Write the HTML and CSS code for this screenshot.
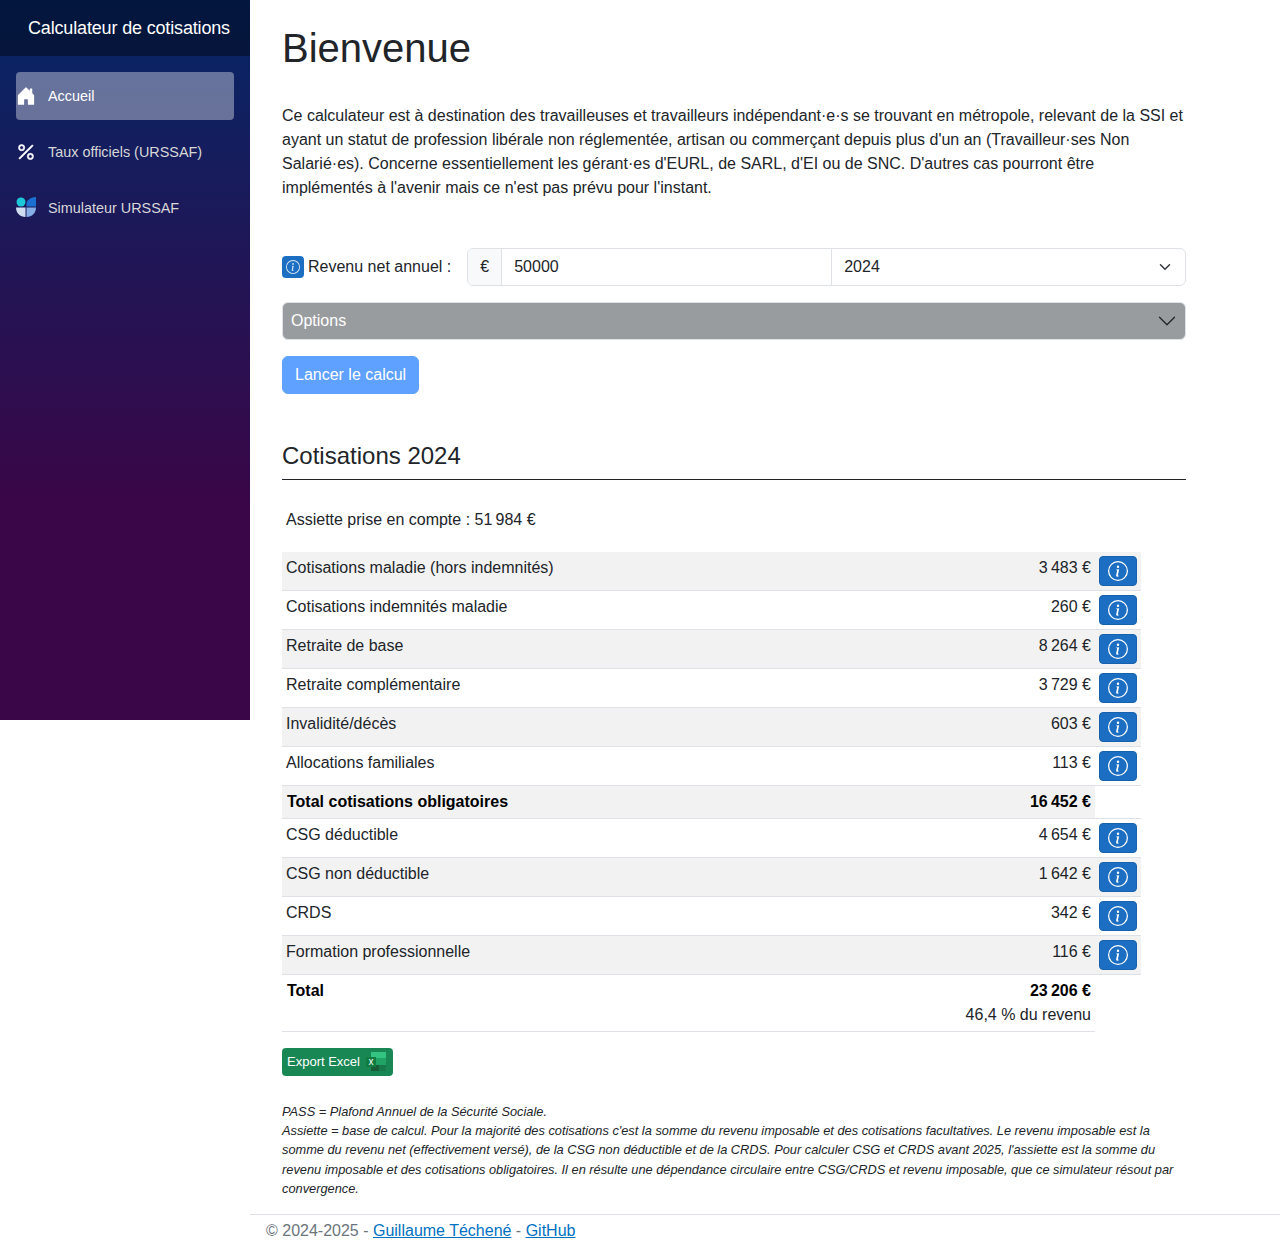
FILE: index.html
```html
<!DOCTYPE html>
<html lang="fr">
<head>
  <meta charset="UTF-8" />
  <meta name="viewport" content="width=device-width, initial-scale=1" />
  <title>Calculateur de cotisations</title>
  <link rel="stylesheet" href="styles.css">
</head>
<body>
  <svg class="sprite" aria-hidden="true">
    <symbol id="info" viewBox="0 0 16 16">
      <path d="M8 15A7 7 0 1 1 8 1a7 7 0 0 1 0 14m0 1A8 8 0 1 0 8 0a8 8 0 0 0 0 16"/>
      <path d="m8.93 6.588-2.29.287-.082.38.45.083c.294.07.352.176.288.469l-.738 3.468c-.194.897.105 1.319.808 1.319.545 0 1.178-.252 1.465-.598l.088-.416c-.2.176-.492.246-.686.246-.275 0-.375-.193-.304-.533zM9 4.5a1 1 0 1 1-2 0 1 1 0 0 1 2 0"/>
    </symbol>
  </svg>

  <aside class="sidebar">
    <div class="brand">Calculateur de cotisations</div>
    <nav class="nav">
      <a class="nav-link active" href="#">
        <svg class="nav-icon" viewBox="0 0 16 16"><path d="M6.5 14.5v-3.505c0-.245.25-.495.5-.495h2c.25 0 .5.25.5.5v3.5a.5.5 0 0 0 .5.5h4a.5.5 0 0 0 .5-.5v-7a.5.5 0 0 0-.146-.354L13 5.793V2.5a.5.5 0 0 0-.5-.5h-1a.5.5 0 0 0-.5.5v1.293L8.354 1.146a.5.5 0 0 0-.708 0l-6 6A.5.5 0 0 0 1.5 7.5v7a.5.5 0 0 0 .5.5h4a.5.5 0 0 0 .5-.5"/></svg>
        Accueil
      </a>
      <a class="nav-link" href="#">
        <svg class="nav-icon icon-percent" viewBox="0 0 16 16"><path d="M13.442 2.558a.625.625 0 0 1 0 .884l-10 10a.625.625 0 1 1-.884-.884l10-10a.625.625 0 0 1 .884 0M4.500 6a1.500 1.500 0 1 1 0-3 1.500 1.500 0 0 1 0 3m0 1a2.500 2.500 0 1 0 0-5 2.500 2.500 0 0 0 0 5m7 6a1.500 1.500 0 1 1 0-3 1.500 1.500 0 0 1 0 3m0 1a2.500 2.500 0 1 0 0-5 2.500 2.500 0 0 0 0 5"/></svg>
        Taux officiels (URSSAF)
      </a>
      <a class="nav-link" href="#">
        <svg class="nav-icon icon-urssaf" viewBox="0 0 20 20">
          <circle cx="5" cy="5" r="4.5" fill="#1cc8d8"/>
          <path d="M10.500 9.500V7c0-3.500 3-6.500 9.500-7v9.500z" fill="#1a6fd0"/>
          <path d="M0 10.500h9.500V20C4 20 0 16 0 10.500z" fill="#cfdcf2"/>
          <path d="M10.500 10.500H20C20 16 16 20 10.500 20z" fill="#86aee6"/>
        </svg>
        Simulateur URSSAF
      </a>
    </nav>
  </aside>

  <div class="page">
    <main class="content">
      <h1>Bienvenue</h1>
      <p class="intro">Ce calculateur est à destination des travailleuses et travailleurs indépendant·e·s se trouvant en métropole, relevant de la SSI et ayant un statut de profession libérale non réglementée, artisan ou commerçant depuis plus d'un an (Travailleur·ses Non Salarié·es). Concerne essentiellement les gérant·es d'EURL, de SARL, d'EI ou de SNC. D'autres cas pourront être implémentés à l'avenir mais ce n'est pas prévu pour l'instant.</p>

      <form class="calc-form">
        <div class="revenue-row">
          <label class="revenue-label">
            <span class="info-small"><svg><use href="#info"/></svg></span>
            Revenu net annuel :
          </label>
          <div class="input-group">
            <span class="input-addon">€</span>
            <span class="input-value">50000</span>
            <span class="input-select">2024
              <svg class="chevron-small" viewBox="0 0 16 16"><path fill="none" stroke="#343a40" stroke-linecap="round" stroke-linejoin="round" stroke-width="2" d="m2 5 6 6 6-6"/></svg>
            </span>
          </div>
        </div>
        <div class="options">
          <span>Options</span>
          <svg class="chevron-large" viewBox="0 0 16 16"><path fill-rule="evenodd" d="M1.646 4.646a.5.5 0 0 1 .708 0L8 10.293l5.646-5.647a.5.5 0 0 1 .708.708l-6 6a.5.5 0 0 1-.708 0l-6-6a.5.5 0 0 1 0-.708"/></svg>
        </div>
        <button type="button" class="run-btn">Lancer le calcul</button>
      </form>

      <h2>Cotisations 2024</h2>
      <p class="assiette">Assiette prise en compte : 51&#8239;984 €</p>

      <table class="results">
        <tr class="odd"><td class="label">Cotisations maladie (hors indemnités)</td><td class="amount">3&#8239;483 €</td><td class="action"><button type="button" class="info-btn"><svg><use href="#info"/></svg></button></td></tr>
        <tr><td class="label">Cotisations indemnités maladie</td><td class="amount">260 €</td><td class="action"><button type="button" class="info-btn"><svg><use href="#info"/></svg></button></td></tr>
        <tr class="odd"><td class="label">Retraite de base</td><td class="amount">8&#8239;264 €</td><td class="action"><button type="button" class="info-btn"><svg><use href="#info"/></svg></button></td></tr>
        <tr><td class="label">Retraite complémentaire</td><td class="amount">3&#8239;729 €</td><td class="action"><button type="button" class="info-btn"><svg><use href="#info"/></svg></button></td></tr>
        <tr class="odd"><td class="label">Invalidité/décès</td><td class="amount">603 €</td><td class="action"><button type="button" class="info-btn"><svg><use href="#info"/></svg></button></td></tr>
        <tr><td class="label">Allocations familiales</td><td class="amount">113 €</td><td class="action"><button type="button" class="info-btn"><svg><use href="#info"/></svg></button></td></tr>
        <tr class="subtotal"><td class="label">Total cotisations obligatoires</td><td class="amount">16&#8239;452 €</td><td class="action"></td></tr>
        <tr><td class="label">CSG déductible</td><td class="amount">4&#8239;654 €</td><td class="action"><button type="button" class="info-btn"><svg><use href="#info"/></svg></button></td></tr>
        <tr class="odd"><td class="label">CSG non déductible</td><td class="amount">1&#8239;642 €</td><td class="action"><button type="button" class="info-btn"><svg><use href="#info"/></svg></button></td></tr>
        <tr><td class="label">CRDS</td><td class="amount">342 €</td><td class="action"><button type="button" class="info-btn"><svg><use href="#info"/></svg></button></td></tr>
        <tr class="odd"><td class="label">Formation professionnelle</td><td class="amount">116 €</td><td class="action"><button type="button" class="info-btn"><svg><use href="#info"/></svg></button></td></tr>
        <tr class="grand-total"><td class="label">Total</td><td class="amount"><strong>23&#8239;206 €</strong><br>46,4 % du revenu</td><td class="action"></td></tr>
      </table>

      <button type="button" class="export-btn">Export Excel
        <svg class="excel-icon" viewBox="0 0 20 19">
          <rect x="5" y="0" width="15" height="6" fill="#33c481"/>
          <rect x="5" y="6" width="15" height="7" fill="#21a366"/>
          <rect x="5" y="13" width="8" height="6" fill="#185c37"/>
          <rect x="13" y="13" width="7" height="6" fill="#17784a"/>
          <rect x="0" y="5" width="10" height="10" fill="#107c41"/>
          <text class="excel-x" x="5" y="12.5" text-anchor="middle">x</text>
        </svg>
      </button>

      <p class="notes">PASS = Plafond Annuel de la Sécurité Sociale.<br>Assiette = base de calcul. Pour la majorité des cotisations c'est la somme du revenu imposable et des cotisations facultatives. Le revenu imposable est la somme du revenu net (effectivement versé), de la CSG non déductible et de la CRDS. Pour calculer CSG et CRDS avant 2025, l'assiette est la somme du revenu imposable et des cotisations obligatoires. Il en résulte une dépendance circulaire entre CSG/CRDS et revenu imposable, que ce simulateur résout par convergence.</p>
    </main>
    <footer class="footer">© 2024-2025 - <a href="#">Guillaume Téchené</a> - <a href="#">GitHub</a></footer>
  </div>
</body>
</html>
```

FILE: styles.css
```css
* {
  box-sizing: border-box;
}
html, body {
  margin: 0;
}
body {
  display: flex;
  align-items: flex-start;
  font-family: "Liberation Sans", Arial, sans-serif;
  font-size: 16px;
  line-height: 24px;
  color: #212529;
  background: #fff;
}
.sprite {
  display: none;
}

/* sidebar */
.sidebar {
  flex: 0 0 250px;
  width: 250px;
  height: 720px;
  background-image: linear-gradient(180deg, #052767 0%, #3a0647 70%);
}
.brand {
  height: 56px;
  display: flex;
  align-items: center;
  padding-left: 28px;
  background: rgba(0, 0, 0, 0.4);
  color: #fff;
  font-size: 18px;
  letter-spacing: -0.16px;
}
.nav {
  display: flex;
  flex-direction: column;
  gap: 8px;
  padding: 16px 16px 0;
}
.nav-link {
  height: 48px;
  display: flex;
  align-items: center;
  gap: 12px;
  border-radius: 4px;
  color: #d7d7d7;
  font-size: 14.4px;
  text-decoration: none;
}
.nav-link.active {
  background: rgba(255, 255, 255, 0.37);
  color: #fff;
}
.nav-icon {
  flex: 0 0 20px;
  width: 20px;
  height: 20px;
  fill: currentColor;
}
.icon-percent {
  stroke: #fff;
  stroke-width: 0.5;
  margin-top: -1px;
  color: #fff;
}
.icon-urssaf {
  margin-top: -2px;
}

/* main */
.page {
  flex: 1;
  min-width: 0;
}
.content {
  padding: 24px 94px 0 32px;
}
h1 {
  margin: 0 0 32px;
  font-size: 40px;
  font-weight: 500;
  line-height: 48px;
}
.intro {
  margin: 0 0 48px;
}
.revenue-row {
  display: flex;
  align-items: center;
  gap: 16px;
}
.revenue-label {
  display: flex;
  align-items: center;
  gap: 4px;
}
.info-small {
  width: 22px;
  height: 22px;
  display: flex;
  align-items: center;
  justify-content: center;
  background: #1b6ec2;
  border-radius: 4px;
}
.info-small svg {
  width: 14px;
  height: 14px;
  fill: #d8e6f5;
}
.input-group {
  flex: 1;
  height: 38px;
  display: flex;
  border: 1px solid #dee2e6;
  border-radius: 6px;
}
.input-addon {
  width: 34px;
  display: flex;
  align-items: center;
  justify-content: center;
  background: #f8f9fa;
  border-right: 1px solid #dee2e6;
  border-radius: 6px 0 0 6px;
}
.input-value {
  width: 330px;
  padding: 6px 12px;
  border-right: 1px solid #dee2e6;
}
.input-select {
  flex: 1;
  display: flex;
  align-items: center;
  justify-content: space-between;
  padding: 6px 14px 6px 12px;
}
.chevron-small {
  width: 12px;
  height: 12px;
}
.options {
  height: 38px;
  margin-top: 16px;
  display: flex;
  align-items: center;
  justify-content: space-between;
  padding: 0 8px 0 8px;
  background: #999c9f;
  border: 1px solid #dee2e6;
  border-radius: 6px;
  color: #fff;
}
.chevron-large {
  width: 20px;
  height: 20px;
  fill: #212529;
}
.run-btn {
  display: block;
  height: 38px;
  margin-top: 16px;
  padding: 0 12px;
  background: #5ea1ff;
  border: 1px solid #5ea1ff;
  border-radius: 6px;
  color: #fff;
  font: inherit;
}
h2 {
  margin: 47px 0 0;
  padding-bottom: 9px;
  border-bottom: 1px solid #212529;
  font-size: 24px;
  font-weight: 500;
  line-height: 29px;
}
.assiette {
  margin: 28px 0 20px 4px;
}

/* table */
.results {
  width: 859px;
  border-collapse: collapse;
  color: #212529;
}
.results tr {
  border-bottom: 1px solid #dee2e6;
}
.results td {
  padding: 4px;
  vertical-align: top;
}
.results .label {
  text-align: left;
}
.results .amount {
  text-align: right;
  white-space: nowrap;
}
.results .action {
  width: 46px;
  padding: 4px;
}
.odd td {
  background: #f2f2f2;
}
.subtotal .label, .subtotal .amount {
  background: #f2f2f2;
  font-weight: bold;
  color: #000;
}
.subtotal .label, .grand-total .label {
  padding-left: 5px;
}
.grand-total .label, .grand-total strong {
  font-weight: bold;
  color: #000;
}
.grand-total .label, .grand-total .amount {
  border-bottom: 1px solid #dee2e6;
}
.results tr:last-child {
  border-bottom: 0;
}
.info-btn {
  display: flex;
  align-items: center;
  justify-content: center;
  width: 38px;
  height: 30px;
  padding: 0;
  background: #1b6ec2;
  border: 1px solid #1861ac;
  border-radius: 4px;
}
.info-btn svg {
  width: 20px;
  height: 20px;
  fill: #fff;
}

.export-btn {
  display: flex;
  align-items: center;
  gap: 6px;
  height: 28px;
  margin-top: 16px;
  padding: 0 7px 1px 5px;
  background: #198754;
  border: 0;
  border-radius: 4px;
  color: #fff;
  font: 13px/1 "Liberation Sans", Arial, sans-serif;
}
.excel-icon {
  width: 20px;
  height: 19px;
}
.excel-x {
  fill: #fff;
  font-size: 10px;
  font-family: "Liberation Sans", Arial, sans-serif;
}
.notes {
  margin: 26px 0 0;
  font-size: 12.8px;
  font-style: italic;
  line-height: 19.2px;
}
.footer {
  margin-top: 16px;
  padding: 4px 16px;
  border-top: 1px solid #dee2e6;
  color: #6c757d;
}
.footer a {
  color: #0071c1;
}
```
